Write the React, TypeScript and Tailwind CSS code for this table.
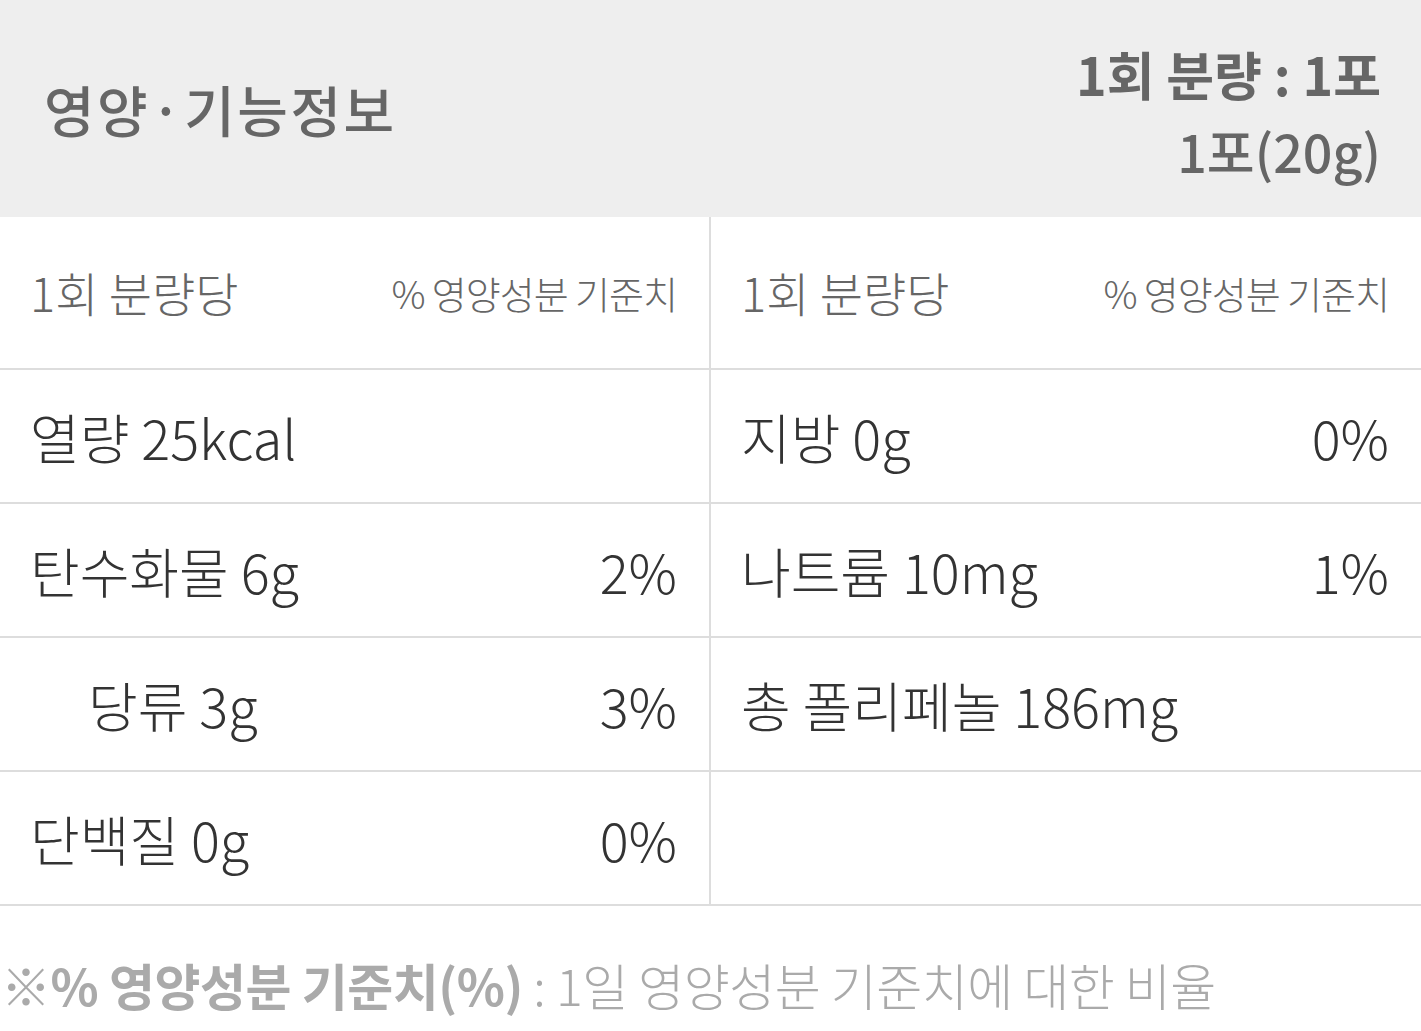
const font = { fontFamily: '"Noto Sans CJK KR", "Noto Sans", sans-serif' }

type Cell = { label: string; pct?: string; indent?: boolean } | null

const rows: [Cell, Cell][] = [
  [{ label: '열량 25kcal' }, { label: '지방 0g', pct: '0%' }],
  [{ label: '탄수화물 6g', pct: '2%' }, { label: '나트륨 10mg', pct: '1%' }],
  [{ label: '당류 3g', pct: '3%', indent: true }, { label: '총 폴리페놀 186mg' }],
  [{ label: '단백질 0g', pct: '0%' }, null],
]

const HeadCell = ({ left }: { left?: boolean }) => (
  <div
    className={`h-[153px] flex items-center justify-between pl-[30px] pr-[32px] border-b-2 border-[#dddddd] ${
      left ? 'border-r-2' : ''
    }`}
  >
    <span className="text-[47px] font-light text-[#666666]">1회 분량당</span>
    <span className="text-[38px] font-light text-[#666666] tracking-[-1px]">% 영양성분 기준치</span>
  </div>
)

const DataCell = ({ cell, left }: { cell: Cell; left?: boolean }) => (
  <div
    className={`h-[134px] flex items-center justify-between pr-[32px] border-b-2 border-[#dddddd] ${
      left ? 'border-r-2' : ''
    } ${cell?.indent ? 'pl-[88px]' : 'pl-[30px]'}`}
  >
    <span className="text-[54px] font-light text-[#333333]">{cell?.label}</span>
    {cell?.pct && <span className="text-[54px] font-light text-[#333333]">{cell.pct}</span>}
  </div>
)

const App: React.FC = () => {
  return (
    <div className="w-[1421px] h-[1031px] bg-white overflow-hidden" style={font}>
      <div className="h-[217px] bg-[#eeeeee] flex items-center justify-between pl-[44px] pr-[40px]">
        <h1 className="text-[55px] font-medium text-[#666666] tracking-[2.5px] leading-none">영양·기능정보</h1>
        <div className="text-right text-[52px] text-[#666666] leading-[77px] pt-[6px]">
          <div className="font-bold">1회 분량 : 1포</div>
          <div className="font-medium">1포(20g)</div>
        </div>
      </div>

      <div className="grid grid-cols-[711px_1fr]">
        <HeadCell left />
        <HeadCell />
        {rows.map(([l, r], i) => (
          <>
            <DataCell key={`l${i}`} cell={l} left />
            <DataCell key={`r${i}`} cell={r} />
          </>
        ))}
      </div>

      <div className="pl-[1px] pt-[41px] text-[50px] text-[#aaaaaa] tracking-[-0.5px]">
        <span className="font-bold">※% 영양성분 기준치(%)</span>
        <span className="font-light"> : 1일 영양성분 기준치에 대한 비율</span>
      </div>
    </div>
  )
}

export default App
